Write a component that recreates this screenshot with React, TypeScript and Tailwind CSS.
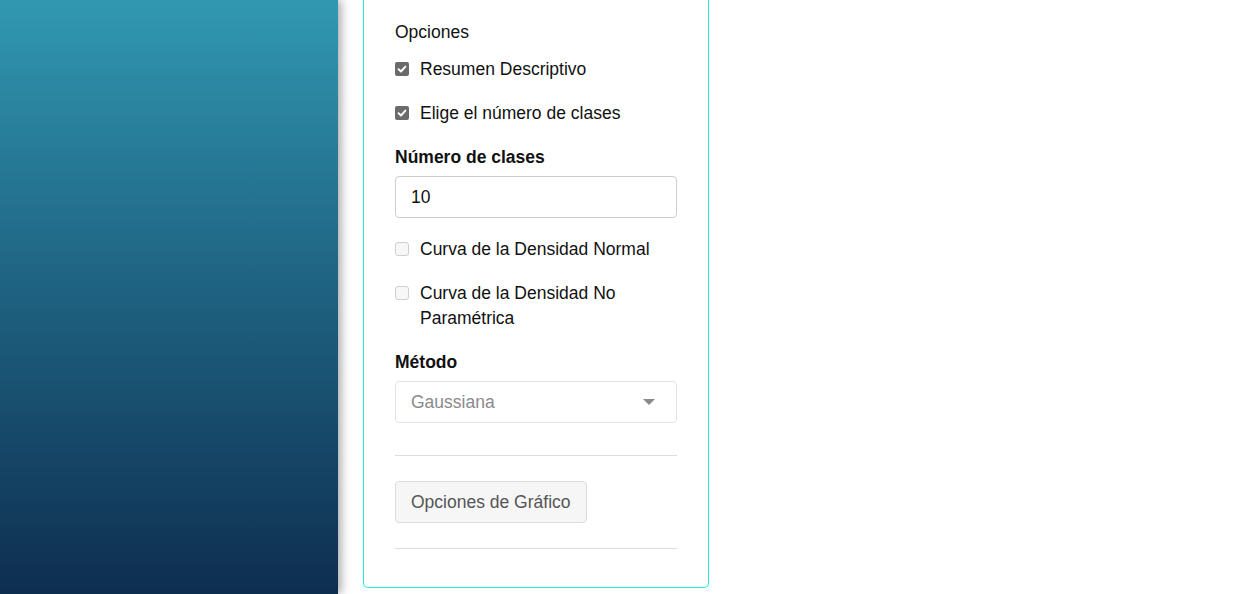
import React from "react";

function Check({ checked, label }: { checked: boolean; label: React.ReactNode }) {
  return (
    <label className="flex items-start gap-[11px] leading-[25px]">
      <span
        className={
          checked
            ? "mt-[5px] flex h-[14px] w-[14px] shrink-0 items-center justify-center rounded-[2px] bg-[#6b6b6b]"
            : "mt-[5px] h-[14px] w-[14px] shrink-0 rounded-[3px] border border-[#cfcfcf] bg-[#f7f7f7]"
        }
      >
        {checked && (
          <svg width="10" height="10" viewBox="0 0 10 10">
            <path d="M1.6 5.2 L4 7.5 L8.4 2.6" fill="none" stroke="white" strokeWidth="1.9" strokeLinecap="round" strokeLinejoin="round" />
          </svg>
        )}
      </span>
      <span>{label}</span>
    </label>
  );
}

export default function App() {
  return (
    <div
      className="flex h-[594px] w-[1242px] overflow-hidden bg-white text-[17.5px] text-[#111]"
      style={{ fontFamily: '"Liberation Sans", Arial, sans-serif' }}
    >
      <div className="relative z-10 h-full w-[338px] shrink-0 bg-gradient-to-b from-[#3198b2] to-[#0e2e50] shadow-[3px_0_9px_rgba(0,0,0,0.35)]" />
      <div className="pl-[25px]">
        <div className="flex w-[346px] flex-col rounded-b-[5px] border-x border-b border-[#1eecd2] px-[31px] pb-[38px] pt-[20px]">
          <div className="leading-[25px]">Opciones</div>
          <div className="mt-[12px] flex flex-col gap-[19px]">
            <Check checked label="Resumen Descriptivo" />
            <Check checked label="Elige el número de clases" />
          </div>
          <div className="mt-[19px] font-bold leading-[25px]">Número de clases</div>
          <div className="mt-[6px] flex h-[42px] items-center rounded-[4px] border border-[#cccccc] pl-[15px]">10</div>
          <div className="mt-[19px] flex flex-col gap-[19px]">
            <Check checked={false} label="Curva de la Densidad Normal" />
            <Check checked={false} label={<>Curva de la Densidad No<br />Paramétrica</>} />
          </div>
          <div className="mt-[19px] font-bold leading-[25px]">Método</div>
          <div className="mt-[6px] flex h-[42px] items-center justify-between rounded-[4px] border border-[#e3e3e3] pl-[15px] pr-[21px] text-[#8a8a8a]">
            <span>Gaussiana</span>
            <svg width="12" height="6" viewBox="0 0 12 6">
              <path d="M0 0 L12 0 L6 6 Z" fill="#8a8a8a" />
            </svg>
          </div>
          <div className="mt-[32px] h-px bg-[#dcdcdc]" />
          <div className="mt-[25px]">
            <button className="flex h-[42px] items-center rounded-[4px] border border-[#dddddd] bg-[#f6f6f6] px-[15px] text-[#555]">
              Opciones de Gráfico
            </button>
          </div>
          <div className="mt-[25px] h-px bg-[#dcdcdc]" />
        </div>
      </div>
    </div>
  );
}
